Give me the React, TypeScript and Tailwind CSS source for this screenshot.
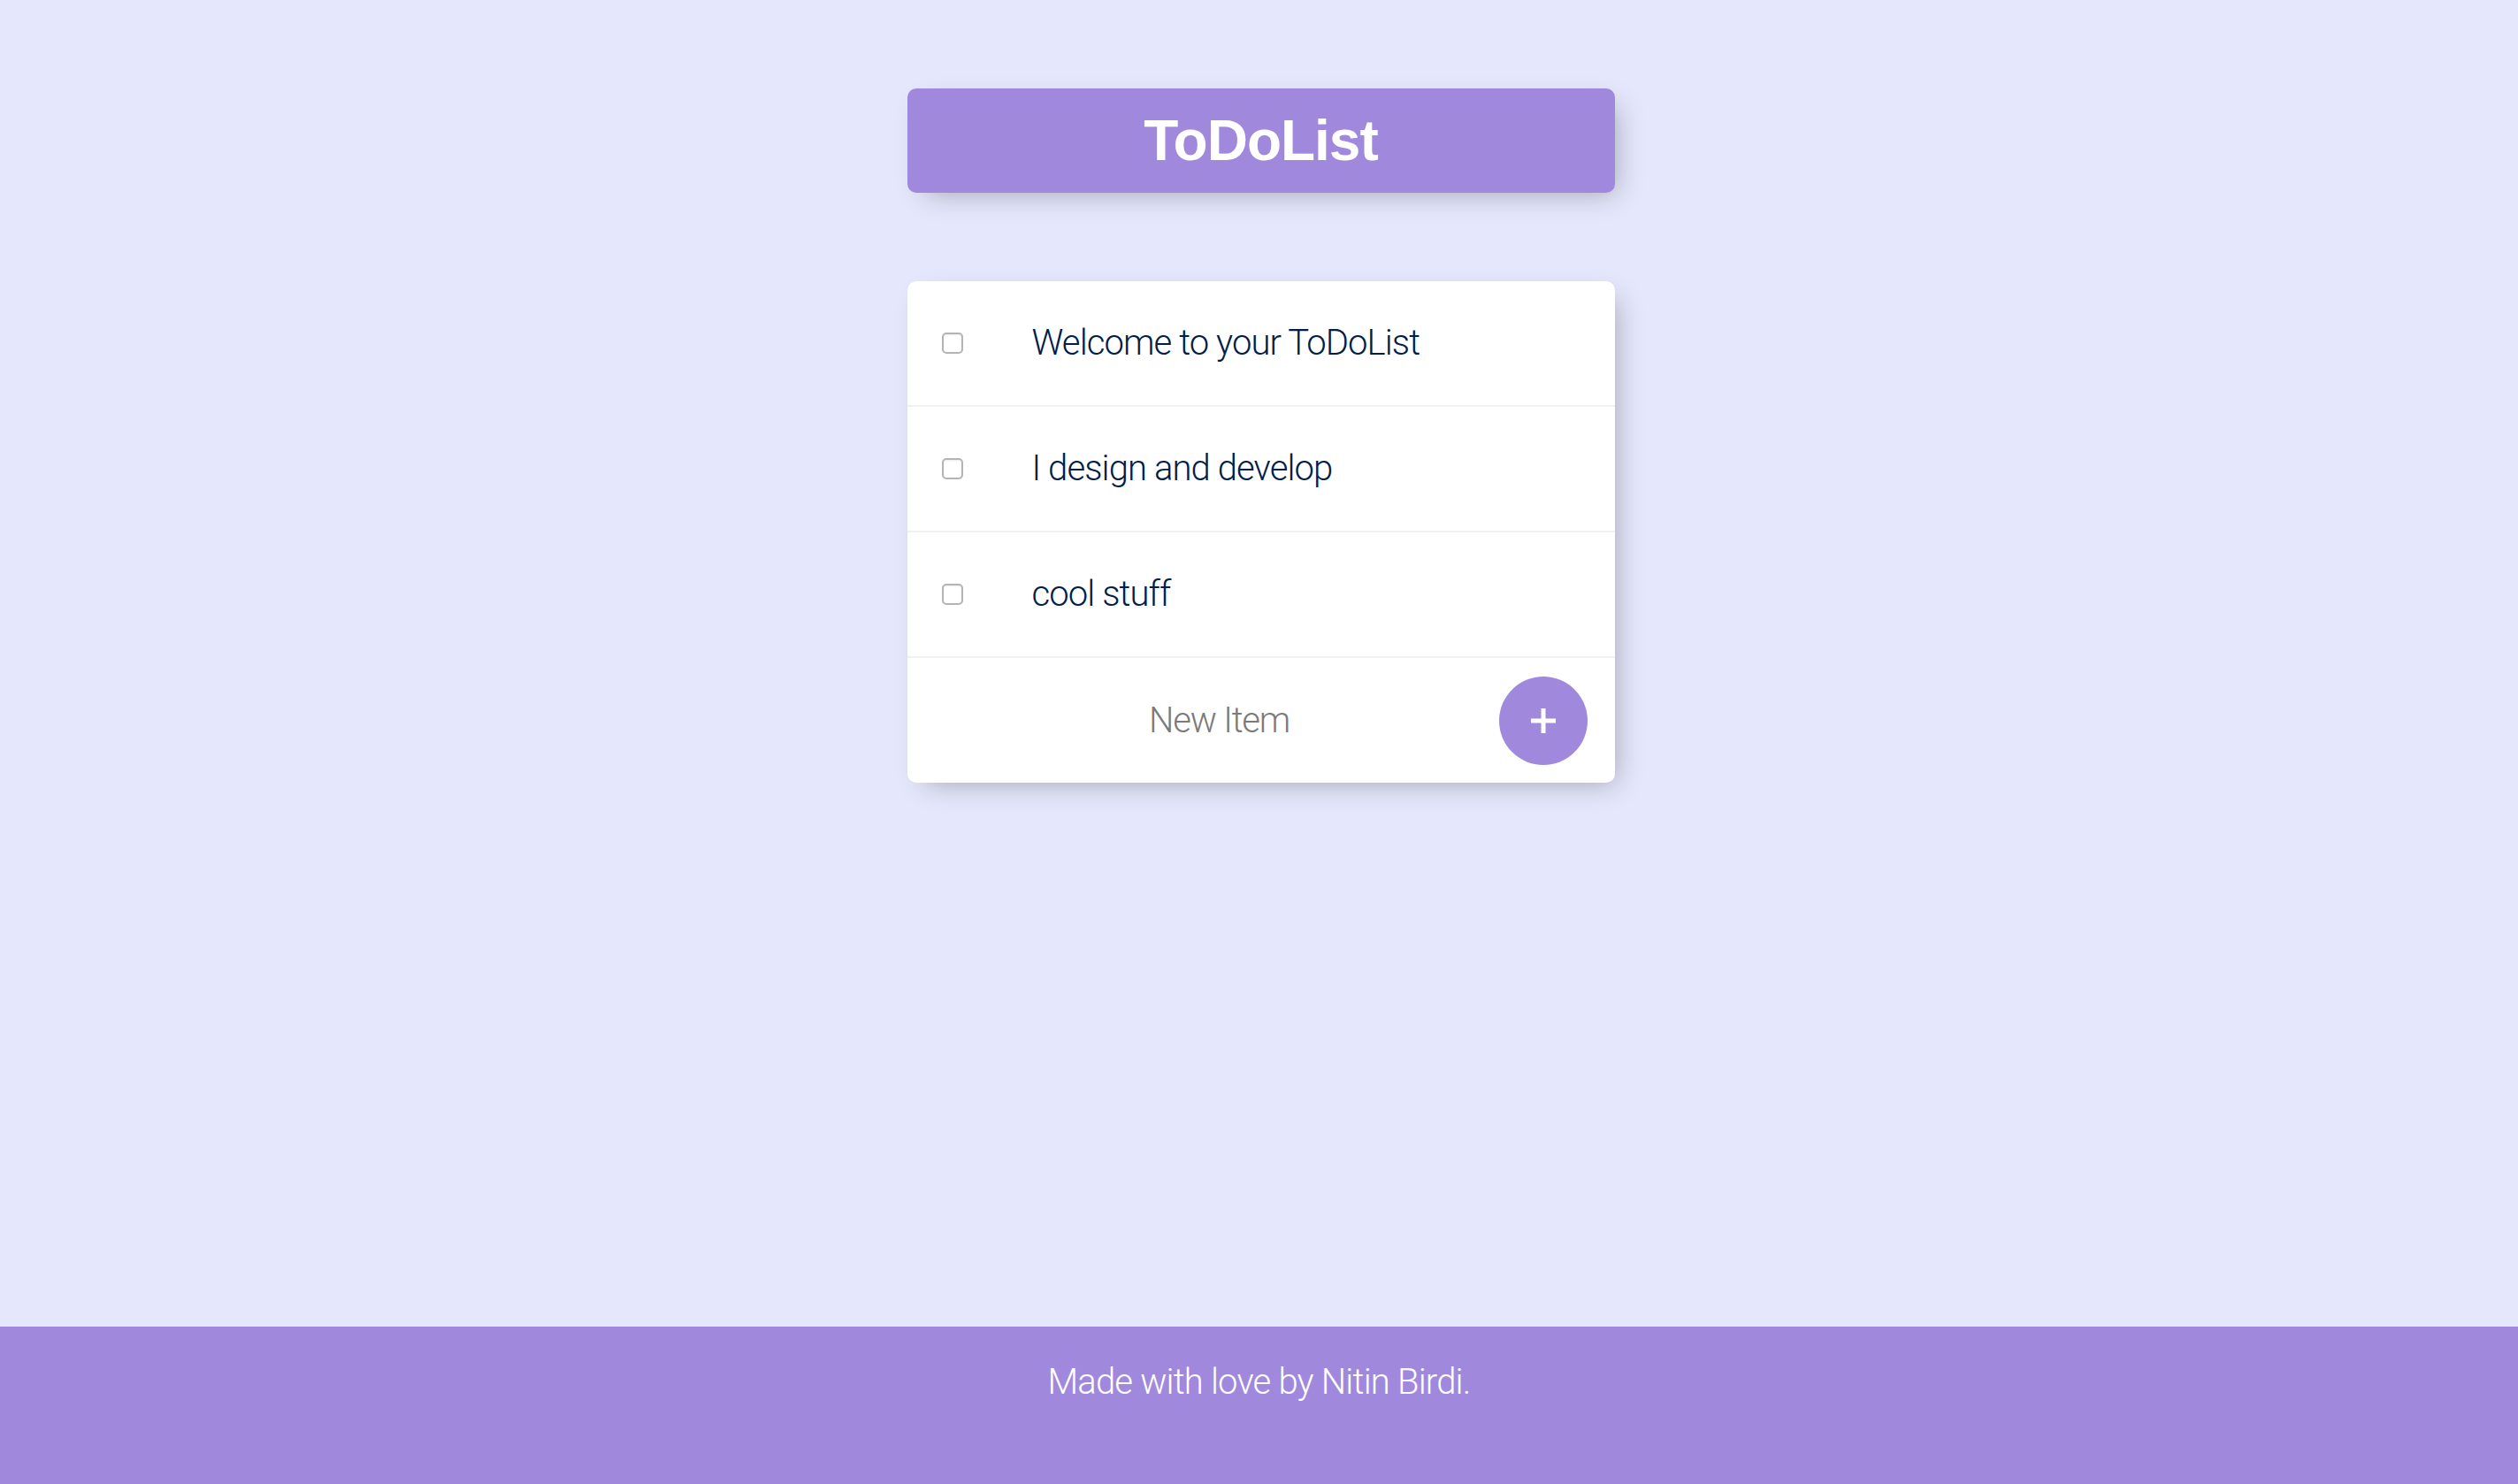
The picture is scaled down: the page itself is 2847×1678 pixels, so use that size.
import React, { useState } from "react";

const items = ["Welcome to your ToDoList", "I design and develop", "cool stuff"];

function Item({ label }: { label: string }) {
  const [done, setDone] = useState(false);
  return (
    <div className="flex h-[142px] items-center border-b-2 border-[#f1f1f1]">
      <input
        type="checkbox"
        checked={done}
        onChange={() => setDone(!done)}
        className="ml-[39px] h-[24px] w-[24px] appearance-none rounded-[5px] border-2 border-[#b4b4b4] bg-white shadow-[inset_0_1px_2px_rgba(0,0,0,0.08)]"
      />
      <p
        className={
          "ml-[78px] text-[40px] font-light tracking-[-0.9px] text-[#00204a] " +
          (done ? "line-through decoration-[#a089dd]" : "")
        }
      >
        {label}
      </p>
    </div>
  );
}

export default function App() {
  const [text, setText] = useState("");
  return (
    <div className="flex h-[1678px] flex-col bg-[#e5e8fc] font-['Roboto','Liberation_Sans',sans-serif]">
      <main className="flex-1 pt-[100px]">
        <div className="mx-auto flex h-[118px] w-[800px] translate-x-[2px] items-center justify-center rounded-[10px] bg-[#a089dd] shadow-[10px_10px_30px_-10px_rgba(0,0,0,0.3)]">
          <h1 className="font-['Liberation_Sans',sans-serif] text-[64px] font-bold tracking-[-1px] text-white">
            ToDoList
          </h1>
        </div>

        <div className="mx-auto mt-[100px] w-[800px] translate-x-[2px] rounded-[10px] bg-white shadow-[10px_10px_30px_-10px_rgba(0,0,0,0.3)]">
          {items.map((it) => (
            <Item key={it} label={it} />
          ))}
          <form
            className="flex h-[141px] items-center pl-[40px]"
            onSubmit={(e) => e.preventDefault()}
          >
            <input
              type="text"
              value={text}
              onChange={(e) => setText(e.target.value)}
              placeholder="New Item"
              className="h-[120px] w-[626px] bg-transparent text-center text-[40px] font-light tracking-[-1.2px] text-[#00204a] outline-none placeholder:text-[#7b7b7b]"
            />
            <button
              type="submit"
              className="ml-[3px] flex h-[100px] w-[100px] items-center justify-center rounded-full bg-[#a089dd] text-white"
            >
              <svg width="30" height="30" viewBox="0 0 30 30" fill="none">
                <path d="M15 1v28M1 15h28" stroke="white" strokeWidth="5" />
              </svg>
            </button>
          </form>
        </div>
      </main>

      <footer className="flex h-[178px] justify-center bg-[#a089dd] pt-[40px]">
        <p className="text-[40px] font-light leading-[46px] tracking-[-0.8px] text-white">
          Made with love by Nitin Birdi.
        </p>
      </footer>
    </div>
  );
}
